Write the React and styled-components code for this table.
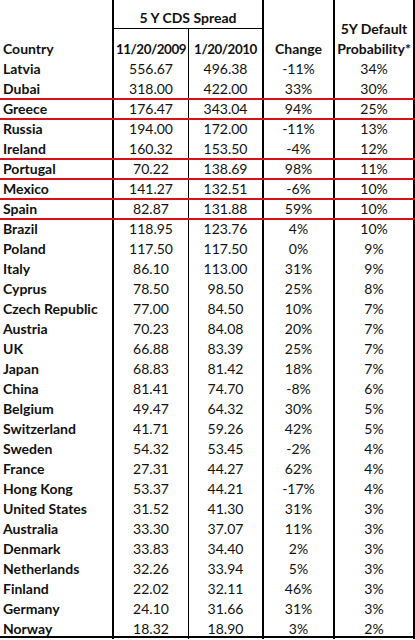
import React from "react";
import styled, { createGlobalStyle } from "styled-components";

const Global = createGlobalStyle`
  html, body { margin: 0; padding: 0; background: #fff; }
  body { font-family: Lato, "Liberation Sans", Arial, sans-serif; color: #111; }
`;

const COLS = "114px 75px 75px 71px 80px";

const Table = styled.div`
  width: 415px;
  display: flex;
  flex-direction: column;
  font-size: 14px;
`;

const Header = styled.div`
  display: grid;
  grid-template-columns: ${COLS};
  grid-template-rows: 29px 30px;
  font-weight: 700;
`;

const HCell = styled.div`
  grid-column: ${(p) => p.col};
  grid-row: ${(p) => p.row};
  display: flex;
  flex-direction: column;
  justify-content: flex-end;
  align-items: ${(p) => (p.left ? "flex-start" : "center")};
  padding-left: ${(p) => (p.left ? "3px" : "0")};
  line-height: 20px;
  font-size: ${(p) => (p.narrow ? "13.4px" : "14px")};
  letter-spacing: ${(p) => (p.narrow ? "-0.45px" : "0")};
  border-right: ${(p) => (p.thin ? "1px" : "2px")} solid #000;
  border-bottom: ${(p) => (p.under ? "1px solid #000" : "none")};
  white-space: nowrap;
`;

const Row = styled.div`
  position: relative;
  display: grid;
  grid-template-columns: ${COLS};
  height: 20px;
  &::before {
    content: "";
    display: ${(p) => (p.redTop ? "block" : "none")};
    position: absolute;
    left: 0;
    right: 0;
    top: -1px;
    height: 2px;
    background: #d8101a;
    z-index: 2;
  }
  &::after {
    content: "";
    display: ${(p) => (p.last ? "block" : "none")};
    position: absolute;
    left: 0;
    right: 0;
    bottom: 1px;
    height: 2px;
    background: #000;
    z-index: 2;
  }
`;

const Cell = styled.div`
  line-height: 20px;
  text-align: ${(p) => (p.left ? "left" : "center")};
  padding-left: ${(p) => (p.left ? "3px" : "0")};
  font-weight: ${(p) => (p.left ? 700 : 400)};
  border-right: ${(p) => (p.thin ? "1px" : "2px")} solid #000;
  white-space: nowrap;
`;

const data = [
  ["Latvia", "556.67", "496.38", "-11%", "34%"],
  ["Dubai", "318.00", "422.00", "33%", "30%"],
  ["Greece", "176.47", "343.04", "94%", "25%"],
  ["Russia", "194.00", "172.00", "-11%", "13%"],
  ["Ireland", "160.32", "153.50", "-4%", "12%"],
  ["Portugal", "70.22", "138.69", "98%", "11%"],
  ["Mexico", "141.27", "132.51", "-6%", "10%"],
  ["Spain", "82.87", "131.88", "59%", "10%"],
  ["Brazil", "118.95", "123.76", "4%", "10%"],
  ["Poland", "117.50", "117.50", "0%", "9%"],
  ["Italy", "86.10", "113.00", "31%", "9%"],
  ["Cyprus", "78.50", "98.50", "25%", "8%"],
  ["Czech Republic", "77.00", "84.50", "10%", "7%"],
  ["Austria", "70.23", "84.08", "20%", "7%"],
  ["UK", "66.88", "83.39", "25%", "7%"],
  ["Japan", "68.83", "81.42", "18%", "7%"],
  ["China", "81.41", "74.70", "-8%", "6%"],
  ["Belgium", "49.47", "64.32", "30%", "5%"],
  ["Switzerland", "41.71", "59.26", "42%", "5%"],
  ["Sweden", "54.32", "53.45", "-2%", "4%"],
  ["France", "27.31", "44.27", "62%", "4%"],
  ["Hong Kong", "53.37", "44.21", "-17%", "4%"],
  ["United States", "31.52", "41.30", "31%", "3%"],
  ["Australia", "33.30", "37.07", "11%", "3%"],
  ["Denmark", "33.83", "34.40", "2%", "3%"],
  ["Netherlands", "32.26", "33.94", "5%", "3%"],
  ["Finland", "22.02", "32.11", "46%", "3%"],
  ["Germany", "24.10", "31.66", "31%", "3%"],
  ["Norway", "18.32", "18.90", "3%", "2%"],
];

const redTops = new Set(["Greece", "Russia", "Portugal", "Mexico", "Spain", "Brazil"]);

export default function App() {
  return (
    <>
      <Global />
      <Table>
        <Header>
          <HCell col="1" row="1 / 3" left>Country</HCell>
          <HCell col="2 / 4" row="1" under>5 Y CDS Spread</HCell>
          <HCell col="2" row="2" thin narrow>11/20/2009</HCell>
          <HCell col="3" row="2" narrow>1/20/2010</HCell>
          <HCell col="4" row="1 / 3">Change</HCell>
          <HCell col="5" row="1 / 3">
            <span>5Y Default</span>
            <span>Probability*</span>
          </HCell>
        </Header>
        {data.map((r, i) => (
          <Row key={r[0]} redTop={redTops.has(r[0])} last={i === data.length - 1}>
            <Cell left>{r[0]}</Cell>
            <Cell thin>{r[1]}</Cell>
            <Cell>{r[2]}</Cell>
            <Cell>{r[3]}</Cell>
            <Cell>{r[4]}</Cell>
          </Row>
        ))}
      </Table>
    </>
  );
}
